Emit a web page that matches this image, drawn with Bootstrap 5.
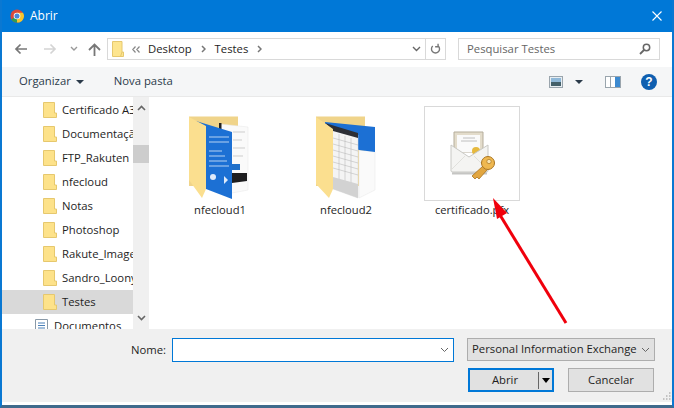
<!DOCTYPE html>
<html lang="pt">

<head>
    <meta charset="UTF-8">
    <meta name="viewport" content="width=device-width, initial-scale=1.0">
    <title>Abrir</title>
    <link rel="stylesheet" href="https://cdn.jsdelivr.net/npm/bootstrap@5.3.3/dist/css/bootstrap.min.css">
    <style>
        body { margin: 0; background: #fff; font-family: "Open Sans", "Liberation Sans", sans-serif; font-size: 11.3px; color: #1e1e1e; }
        .dlg { position: relative; width: 674px; height: 408px; overflow: hidden; background: #fff; border-left: 2px solid #0a78d2; border-right: 2px solid #0a78d2; border-bottom: 3px solid #3f6a8c; }
        .dlg-title { height: 32px; background: #0078d7; color: #fff; font-size: 12px; padding-left: 8px; padding-right: 10px; }
        .title-left { gap: 6px; }
        .dlg-addr { height: 35px; padding-left: 12px; padding-right: 12px; padding-bottom: 1px; }
        .nav-back { width: 30px; }
        .nav-fwd { width: 26px; }
        .nav-list { width: 18px; }
        .nav-up { width: 19px; }
        .addr-box { width: 339px; height: 22px; border: 1px solid #d9d9d9; padding-left: 4px; }
        .addr-sep { padding: 0 9px; }
        .addr-end { width: 20px; height: 20px; border-left: 1px solid #d9d9d9; }
        .search-box { width: 202px; height: 22px; margin-left: 12px; border: 1px solid #d9d9d9; color: #666; padding: 0 8px 0 8px; }
        .dlg-tools { height: 30px; background: #f5f6f7; border-bottom: 1px solid #e9e9e9; padding-left: 17px; padding-right: 15px; color: #2b3a4a; }
        .org-caret { margin-left: 5px; }
        .new-folder { margin-left: 30px; }
        .caret-dn { width: 0; height: 0; border-left: 4px solid transparent; border-right: 4px solid transparent; border-top: 4px solid #2b3a4a; }
        .caret-black { border-top: 5px solid #000; }
        .view-gap { margin-left: 12px; }
        .pane-gap { margin-left: 22px; }
        .help-gap { margin-left: 20px; }
        .dlg-main { height: 232px; }
        .tree { width: 131px; height: 232px; overflow: hidden; padding-top: 1px; }
        .tree-row { height: 24px; padding-left: 41px; white-space: nowrap; overflow: hidden; }
        .tree-row.sel { background: #d9d9d9; }
        .tree-row.doc { padding-left: 32px; }
        .tree-row svg { flex: none; margin-right: 5px; }
        .tree-scroll { width: 16px; background: #f0f0f0; }
        .tree-thumb { height: 18px; background: #cdcdcd; margin-top: 34px; margin-bottom: auto; }
        .tiles { padding: 9px 0 0 23px; gap: 30px; }
        .tile { width: 96px; text-align: center; }
        .tile-pic { height: 95px; }
        .tile-pic.on { border: 1px solid #d9d9d9; }
        .tile-pic svg { filter: blur(0.3px); }
        .tile-name { margin-top: 1px; font-size: 11.2px; line-height: 16px; }
        .dlg-foot { position: relative; height: 73px; background: #f0f0f0; }
        .foot-row { height: 24px; margin-top: 9px; }
        .foot-lbl { width: 164px; line-height: 24px; text-align: right; }
        .name-box { width: 282px; height: 24px; margin-left: 6px; background: #fff; border: 1px solid #0078d7; padding-right: 4px; }
        .type-box { width: 188px; height: 23px; margin-left: 13px; background: #e1e1e1; border: 1px solid #adadad; padding: 0 4px 0 4px; white-space: nowrap; }
        .foot-btns { margin-top: 6px; padding-left: 466px; gap: 14px; }
        .btn-dlg { width: 86px; height: 24px; padding: 0; border-radius: 0; background: #e1e1e1; border: 1px solid #adadad; color: #1e1e1e; font-size: 11.3px; }
        .btn-dlg.on { border: 2px solid #0078d7; }
        .btn-label { padding-left: 2px; }
        .btn-split { width: 14px; border-left: 1px solid #666; height: 17px; }
        .grip { position: absolute; right: 1px; bottom: 1px; }
        .red-arrow { position: absolute; left: -2px; top: 0; pointer-events: none; }
    </style>
</head>

<body>
    <div class="dlg d-flex flex-column">
        <div class="dlg-title d-flex align-items-center justify-content-between">
            <div class="title-left d-flex align-items-center">
                <svg width="14" height="14" viewBox="0 0 16 16">
                    <circle cx="8" cy="8" r="7.5" fill="#d9493c"/>
                    <path d="M8 8 L14.5 11.7 A7.5 7.5 0 0 1 1.5 11.7 Z" fill="#2e9e57"/>
                    <path d="M8 4.2 L14.9 4.2 A7.5 7.5 0 0 1 8 15.5 Z" fill="#f6c42f"/>
                    <circle cx="8" cy="8" r="3.8" fill="#fff"/>
                    <circle cx="8" cy="8" r="2.9" fill="#4a88d8"/>
                </svg>
                <span>Abrir</span>
            </div>
            <svg width="10" height="10" viewBox="0 0 10 10"><path d="M0.5 0.5 L9.5 9.5 M9.5 0.5 L0.5 9.5" stroke="#fff" stroke-width="1.1"/></svg>
        </div>

        <div class="dlg-addr d-flex align-items-center">
            <div class="nav-back d-flex"><svg width="13" height="12" viewBox="0 0 13 12"><path d="M13 6 H2 M6.5 1.5 L2 6 L6.5 10.5" fill="none" stroke="#777" stroke-width="1.7"/></svg></div>
            <div class="nav-fwd d-flex"><svg width="13" height="12" viewBox="0 0 13 12"><path d="M0 6 H11 M6.5 1.5 L11 6 L6.5 10.5" fill="none" stroke="#d4d4d4" stroke-width="1.7"/></svg></div>
            <div class="nav-list d-flex"><svg width="8" height="6" viewBox="0 0 8 6"><path d="M1 1 L4 4 L7 1" fill="none" stroke="#999" stroke-width="1.4"/></svg></div>
            <div class="nav-up d-flex"><svg width="13" height="13" viewBox="0 0 13 13"><path d="M6.5 13 V2 M1 7 L6.5 1.5 L12 7" fill="none" stroke="#777" stroke-width="1.8"/></svg></div>
            <div class="addr-box d-flex align-items-center">
                <svg width="12" height="16" viewBox="0 0 12 16"><path d="M0.5 0.5 H10 V11 H11.5 V15.5 H0.5 Z" fill="#fde58f" stroke="#e6c86e"/><path d="M10 11 L8.5 15.5" stroke="#e6c86e" fill="none"/></svg>
                <svg class="ms-2" width="8" height="7" viewBox="0 0 8 7"><path d="M3.5 0.5 L0.8 3.5 L3.5 6.5 M7.5 0.5 L4.8 3.5 L7.5 6.5" fill="none" stroke="#888" stroke-width="1.2"/></svg>
                <span class="ps-2">Desktop</span>
                <span class="addr-sep d-flex"><svg width="5" height="8" viewBox="0 0 5 8"><path d="M1 1 L4 4 L1 7" fill="none" stroke="#777" stroke-width="1.5"/></svg></span>
                <span>Testes</span>
                <span class="addr-sep d-flex"><svg width="5" height="8" viewBox="0 0 5 8"><path d="M1 1 L4 4 L1 7" fill="none" stroke="#777" stroke-width="1.5"/></svg></span>
                <div class="ms-auto d-flex align-items-center pe-1"><svg width="9" height="6" viewBox="0 0 9 6"><path d="M1 1 L4.5 4.5 L8 1" fill="none" stroke="#666" stroke-width="1.4"/></svg></div>
                <div class="addr-end d-flex align-items-center justify-content-center">
                    <svg width="11" height="12" viewBox="0 0 12 13"><path d="M3 3.3 A4.4 4.4 0 1 0 9 3.3 M3.2 0.8 V4 H6.4" fill="none" stroke="#777" stroke-width="1.5" transform="matrix(-1 0 0 1 12 0)"/></svg>
                </div>
            </div>
            <div class="search-box d-flex align-items-center justify-content-between">
                <span>Pesquisar Testes</span>
                <svg width="12" height="12" viewBox="0 0 12 12"><circle cx="7.5" cy="4.5" r="3.2" fill="none" stroke="#666" stroke-width="1.5"/><path d="M5 7 L1 11" stroke="#666" stroke-width="1.8"/></svg>
            </div>
        </div>

        <div class="dlg-tools d-flex align-items-center">
            <span>Organizar</span>
            <span class="caret-dn org-caret"></span>
            <span class="new-folder">Nova pasta</span>
            <div class="ms-auto d-flex align-items-center">
                <svg width="14" height="12" viewBox="0 0 14 12"><rect x="0.5" y="0.5" width="13" height="11" fill="#e8eef2" stroke="#9aa5ad"/><rect x="2" y="2" width="10" height="4" fill="#8fb8d8"/><rect x="2" y="6" width="10" height="4" fill="#44606a"/></svg>
                <span class="caret-dn view-gap"></span>
                <svg class="pane-gap" width="16" height="12" viewBox="0 0 16 12"><rect x="0.5" y="0.5" width="15" height="11" fill="#fff" stroke="#9aa5ad"/><rect x="10" y="1" width="5" height="10" fill="#3d8ad0"/><rect x="5" y="1" width="1" height="10" fill="#9aa5ad"/></svg>
                <svg class="help-gap" width="16" height="16" viewBox="0 0 16 16"><circle cx="8" cy="8" r="8" fill="#0f5fb0"/><text x="8" y="12.3" text-anchor="middle" font-family="Liberation Sans, sans-serif" font-size="12" font-weight="700" fill="#fff">?</text></svg>
            </div>
        </div>

        <div class="dlg-main d-flex">
            <div class="tree" id="tree"></div>
            <div class="tree-scroll d-flex flex-column align-items-center justify-content-between pt-2 pb-2">
                <svg width="9" height="6" viewBox="0 0 9 6"><path d="M1 5 L4.5 1.5 L8 5" fill="none" stroke="#666" stroke-width="1.6"/></svg>
                <div class="tree-thumb w-100"></div>
                <svg width="9" height="6" viewBox="0 0 9 6"><path d="M1 1 L4.5 4.5 L8 1" fill="none" stroke="#666" stroke-width="1.6"/></svg>
            </div>
            <div class="tiles d-flex align-items-start">
                <div class="tile">
                    <div class="tile-pic d-flex justify-content-center pt-2">
                        <svg width="70" height="88" viewBox="0 0 70 88">
                            <path d="M4 2.5 H53 V72 H4 Z" fill="#f0d48a"/>
                            <path d="M35 10 L63 13 V76 L47 79 L35 70 Z" fill="#fafafa" stroke="#e6e6e6" stroke-width="0.5"/>
                            <path d="M34 9 H36.5 V18 H34 Z" fill="#222"/>
                            <path d="M47 59 H62 V67 L47 69 Z" fill="#1d1d1f"/>
                            <path d="M47 50 H55 V56 H47 Z" fill="#1f6fc9"/>
                            <path d="M48 18 H60 M48 26 H57 M48 34 H60 M48 42 H58" stroke="#cdcdcd" stroke-width="1"/>
                            <path d="M11 7 L47 18 V85 L21 75 Z" fill="#1c70d4"/>
                            <path d="M24 23 H44 M24 28 H44 M24 37 H37 M24 42 H40 M24 47 H42 M24 52 H44" stroke="#b6d2f2" stroke-width="1.1"/>
                            <circle cx="28" cy="63" r="3" fill="#dfeafa"/>
                            <path d="M39 62 L43 66 L39 70 Z" fill="#dfeafa"/>
                            <path d="M4 3 L21 12 V75 L17 84 L4 66 Z" fill="#fbdf8f"/>
                        </svg>
                    </div>
                    <div class="tile-name">nfecloud1</div>
                </div>
                <div class="tile">
                    <div class="tile-pic d-flex justify-content-center pt-2">
                        <svg width="70" height="88" viewBox="0 0 70 88">
                            <path d="M5 2.5 H54 V72 H5 Z" fill="#f0d48a"/>
                            <path d="M48 36 L64 38 V76 L48 84 Z" fill="#fafafa" stroke="#e6e6e6" stroke-width="0.5"/>
                            <path d="M14 8 L64 13 V38 L48 36 L14 20 Z" fill="#1c70d4"/>
                            <path d="M14 10 L47 21 V84 L22 75 Z" fill="#f4f4f4" stroke="#d8d8d8" stroke-width="0.5"/>
                            <path d="M14 9 L47 19 V24 L22 17 Z" fill="#2d2f36"/>
                            <path d="M22 24 L47 31 M22 30 L47 37 M22 36 L47 43 M22 42 L47 49 M22 48 L47 55 M22 54 L47 61 M28 20 V66 M34 22 V68 M40 24 V71" stroke="#b0b0b0" stroke-width="0.5"/>
                            <path d="M22 63 L47 70 V84 L22 75 Z" fill="#d2d2d2"/>
                            <path d="M5 3 L22 15 V75 L18 84 L5 70 Z" fill="#fbdf8f"/>
                        </svg>
                    </div>
                    <div class="tile-name">nfecloud2</div>
                </div>
                <div class="tile">
                    <div class="tile-pic on d-flex justify-content-center">
                        <svg width="94" height="93" viewBox="0 0 94 93">
                            <g transform="translate(1 2)">
                                <path d="M28 23 H57 V43 H28 Z" fill="#e3dccb" stroke="#b5ad9b" stroke-width="1"/>
                                <path d="M31 26 H54 V43 H31 Z" fill="#fafafa"/>
                                <path d="M37 29 H49 M35 32 H51" stroke="#b0b0b0" stroke-width="0.8"/>
                                <circle cx="50" cy="42" r="4" fill="#e6b93e"/>
                                <path d="M25 36 L43 48 L62 36 V62 Q62 63 60 63 H27 Q25 63 25 62 Z" fill="#f4f4f2" stroke="#c8c8c4" stroke-width="1"/>
                                <path d="M25 61 L39 47 M62 61 L48 47" stroke="#e0e0dc" stroke-width="1"/>
                                <path d="M26 64.5 H61" stroke="#8c8c88" stroke-width="2" opacity="0.5"/>
                                <path d="M57 57 L46 67 L49 70 L51 68 L53 70 L61 61" fill="#e2a640" stroke="#a87420" stroke-width="0.8"/>
                                <circle cx="62" cy="54" r="6.5" fill="#efb850" stroke="#a87420" stroke-width="1"/>
                                <circle cx="63" cy="52.5" r="2.2" fill="#f9e4b0" stroke="#a87420" stroke-width="0.7"/>
                            </g>
                        </svg>
                    </div>
                    <div class="tile-name">certificado.pfx</div>
                </div>
            </div>
        </div>

        <div class="dlg-foot">
            <div class="foot-row d-flex align-items-start">
                <label class="foot-lbl" for="nomeArq">Nome:</label>
                <div class="name-box d-flex align-items-center justify-content-end" id="nomeArq">
                    <svg width="9" height="6" viewBox="0 0 9 6"><path d="M1 1 L4.5 4.5 L8 1" fill="none" stroke="#666" stroke-width="1"/></svg>
                </div>
                <div class="type-box d-flex align-items-center justify-content-between">
                    <span>Personal Information Exchange</span>
                    <svg width="9" height="6" viewBox="0 0 9 6"><path d="M1 1 L4.5 4.5 L8 1" fill="none" stroke="#666" stroke-width="1"/></svg>
                </div>
            </div>
            <div class="foot-btns d-flex">
                <button type="button" class="btn btn-dlg on d-flex align-items-center">
                    <span class="flex-grow-1 text-center btn-label">Abrir</span>
                    <span class="btn-split d-flex align-items-center justify-content-center"><span class="caret-dn caret-black"></span></span>
                </button>
                <button type="button" class="btn btn-dlg">Cancelar</button>
            </div>
            <svg class="grip" width="10" height="10" viewBox="0 0 10 10"><path d="M8 2 H9.5 M5 5 H6.5 M8 5 H9.5 M2 8 H3.5 M5 8 H6.5 M8 8 H9.5" stroke="#b4b4b4" stroke-width="1.5"/></svg>
        </div>

        <svg class="red-arrow" width="674" height="408" viewBox="0 0 674 408">
            <path d="M566 323 L500 215" stroke="#f0000c" stroke-width="3" fill="none"/>
            <path d="M493 198 L497 219 L507 213 Z" fill="#f0000c"/>
        </svg>
    </div>

    <script>
        // Folder tree on the left, the last two rows are the selected one and the Documentos entry
        var folders = ['Certificado A3', 'Documentação', 'FTP_Rakuten', 'nfecloud', 'Notas', 'Photoshop', 'Rakute_Images', 'Sandro_Loony', 'Testes'];
        var folderIcon = '<svg width="14" height="16" viewBox="0 0 14 16"><path d="M0.5 0.5 H11.5 V11 H13.5 V15.5 H0.5 Z" fill="#fde28a" stroke="#e6c86e"/></svg>';
        var docIcon = '<svg width="15" height="15" viewBox="0 0 15 15"><path d="M1.5 0.5 H13.5 V14.5 H1.5 Z" fill="#fff" stroke="#8a9aa8"/><path d="M4 4 H11 M4 6.5 H11 M4 9 H11 M4 11.5 H11" stroke="#4a80b8"/></svg>';
        var tree = document.getElementById('tree');
        folders.forEach(function (name) {
            var row = document.createElement('div');
            row.className = 'tree-row d-flex align-items-center' + (name === 'Testes' ? ' sel' : '');
            row.innerHTML = folderIcon + '<span>' + name + '</span>';
            tree.appendChild(row);
        });
        var docs = document.createElement('div');
        docs.className = 'tree-row doc d-flex align-items-center';
        docs.innerHTML = docIcon + '<span>Documentos</span>';
        tree.appendChild(docs);
    </script>
    <script src="https://cdn.jsdelivr.net/npm/bootstrap@5.3.3/dist/js/bootstrap.bundle.min.js"></script>
</body>

</html>
